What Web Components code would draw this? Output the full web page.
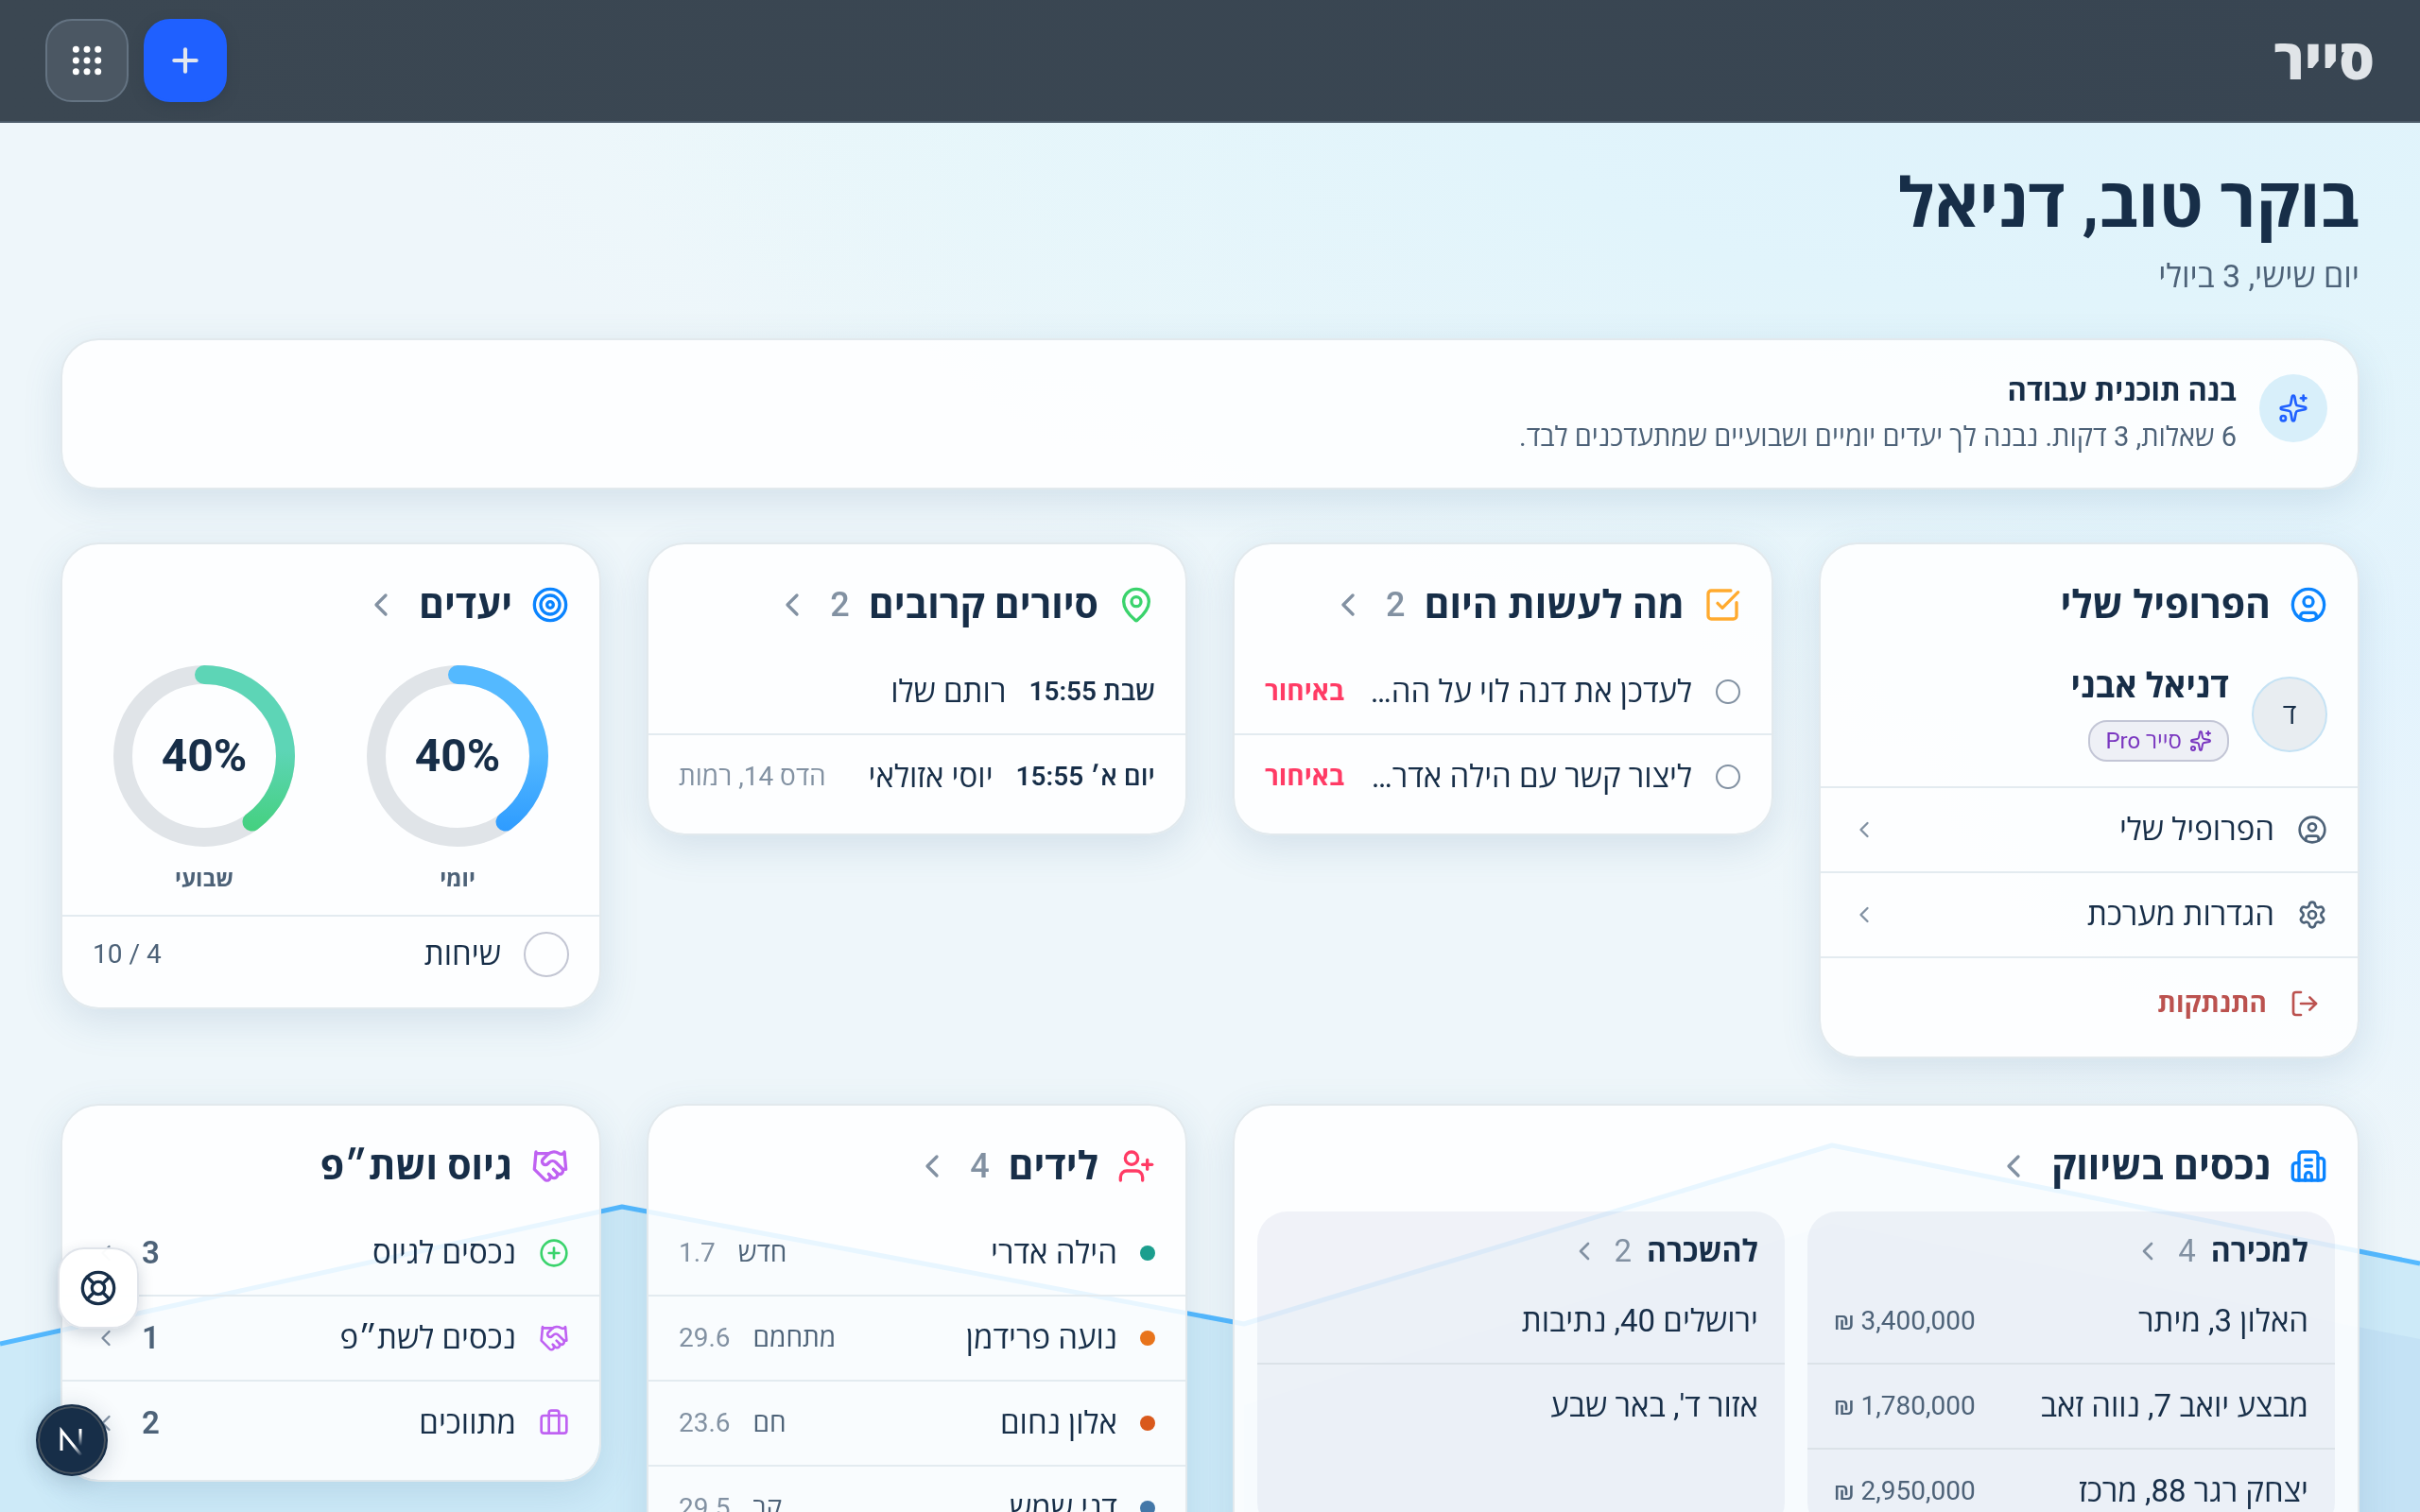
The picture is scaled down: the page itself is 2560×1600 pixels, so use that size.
<!DOCTYPE html>
<html lang="he" dir="rtl">
<head>
<meta charset="utf-8">
<meta name="viewport" content="width=device-width, initial-scale=1">
<title>סייר</title>
<style>
  :root {
    --ink: #172e48;
    --ink-2: #4d6278;
    --ink-3: #8291a2;
    --line: #e3ebf0;
    --blue: #0a84ff;
    --green: #3ad36c;
    --orange: #ffaa2e;
    --pink: #ff3b65;
    --purple: #bf62f2;
    scrollbar-width: none;
  }

  body {
    margin: 0;
    min-height: 100vh;
    background: #eef6fa;
    color: var(--ink);
    font-family: Roboto, "Open Sans", "Noto Sans", sans-serif;
    font-size: 33px;
    line-height: 40px;
  }

  main {
    padding: 50px 64px 64px;
  }

  h1 {
    margin: 0;
    font-size: 72px;
    line-height: 72px;
    font-weight: 700;
  }

  .date {
    margin: 20px 0 46px;
    color: var(--ink-2);
    font-size: 34px;
  }

  .grid {
    display: grid;
    grid-template-columns: repeat(4, minmax(0, 1fr));
    align-items: start;
    gap: 48px;
    margin-top: 56px;
  }

  .wide {
    grid-column: span 2;
  }
</style>
</head>
<body>
  <page-backdrop></page-backdrop>
  <app-header brand="סייר"></app-header>

  <main>
    <h1>בוקר טוב, דניאל</h1>
    <p class="date">יום שישי, 3 ביולי</p>

    <plan-banner>
      <span slot="title">בנה תוכנית עבודה</span>
      <span slot="text">6 שאלות, 3 דקות. נבנה לך יעדים יומיים ושבועיים שמתעדכנים לבד.</span>
    </plan-banner>

    <div class="grid">
      <dash-card heading="הפרופיל שלי" icon="user" color="var(--blue)">
        <profile-head name="דניאל אבני" initial="ד" plan="סייר Pro"></profile-head>
        <link-row icon="user" arrow>הפרופיל שלי</link-row>
        <link-row icon="settings" arrow>הגדרות מערכת</link-row>
        <sign-out>התנתקות</sign-out>
      </dash-card>

      <dash-card heading="מה לעשות היום" icon="check" color="var(--orange)" count="2" arrow>
        <task-row state="באיחור">לעדכן את דנה לוי על הה…</task-row>
        <task-row state="באיחור">ליצור קשר עם הילה אדר…</task-row>
      </dash-card>

      <dash-card heading="סיורים קרובים" icon="pin" color="var(--green)" count="2" arrow>
        <tour-row time="שבת 15:55">רותם שלו</tour-row>
        <tour-row time="יום א׳ 15:55" place="הדס 14, רמות">יוסי אזולאי</tour-row>
      </dash-card>

      <dash-card heading="יעדים" icon="target" color="var(--blue)" arrow>
        <goal-rings>
          <progress-ring value="40" from="#54b9ff" to="#2c9aff">יומי</progress-ring>
          <progress-ring value="40" from="#5dd5b6" to="#43d07c">שבועי</progress-ring>
        </goal-rings>
        <goal-row score="4 / 10">שיחות</goal-row>
      </dash-card>

      <dash-card class="wide" heading="נכסים בשיווק" icon="building" color="var(--blue)" arrow>
        <panel-pair>
          <list-panel heading="למכירה" count="4">
            <estate-row price="3,400,000 ₪">האלון 3, מיתר</estate-row>
            <estate-row price="1,780,000 ₪">מבצע יואב 7, נווה זאב</estate-row>
            <estate-row price="2,950,000 ₪">יצחק רגר 88, מרכז</estate-row>
          </list-panel>
          <list-panel heading="להשכרה" count="2">
            <estate-row>ירושלים 40, נתיבות</estate-row>
            <estate-row>אזור ד', באר שבע</estate-row>
          </list-panel>
        </panel-pair>
      </dash-card>

      <dash-card heading="לידים" icon="userPlus" color="var(--pink)" count="4" arrow>
        <lead-row color="#1b9e8e" status="חדש" date="1.7">הילה אדרי</lead-row>
        <lead-row color="#e8741c" status="מתחמם" date="29.6">נועה פרידמן</lead-row>
        <lead-row color="#d9591c" status="חם" date="23.6">אלון נחום</lead-row>
        <lead-row color="#4377a8" status="קר" date="29.5">דני שמש</lead-row>
      </dash-card>

      <dash-card heading="גיוס ושת״פ" icon="handshake" color="var(--purple)">
        <link-row icon="plus" color="var(--green)" count="3" arrow>נכסים לגיוס</link-row>
        <link-row icon="handshake" color="var(--purple)" count="1" arrow>נכסים לשת״פ</link-row>
        <link-row icon="briefcase" color="var(--purple)" count="2" arrow>מתווכים</link-row>
      </dash-card>
    </div>
  </main>

  <floating-tools></floating-tools>

<script>
const ICONS = {
  user: '<circle cx="12" cy="12" r="10"/><circle cx="12" cy="10" r="3"/><path d="M7 20.662V19a2 2 0 0 1 2-2h6a2 2 0 0 1 2 2v1.662"/>',
  settings: '<path d="M9.671 4.136a2.34 2.34 0 0 1 4.659 0 2.34 2.34 0 0 0 3.319 1.915 2.34 2.34 0 0 1 2.33 4.033 2.34 2.34 0 0 0 0 3.831 2.34 2.34 0 0 1-2.33 4.033 2.34 2.34 0 0 0-3.319 1.915 2.34 2.34 0 0 1-4.659 0 2.34 2.34 0 0 0-3.32-1.915 2.34 2.34 0 0 1-2.33-4.033 2.34 2.34 0 0 0 0-3.831A2.34 2.34 0 0 1 6.35 6.051a2.34 2.34 0 0 0 3.319-1.915"/><circle cx="12" cy="12" r="3"/>',
  logout: '<path d="m16 17 5-5-5-5"/><path d="M21 12H9"/><path d="M9 21H5a2 2 0 0 1-2-2V5a2 2 0 0 1 2-2h4"/>',
  check: '<path d="M21 10.656V19a2 2 0 0 1-2 2H5a2 2 0 0 1-2-2V5a2 2 0 0 1 2-2h12.344"/><path d="m9 11 3 3L22 4"/>',
  pin: '<path d="M20 10c0 4.993-5.539 10.193-7.399 11.799a1 1 0 0 1-1.202 0C9.539 20.193 4 14.993 4 10a8 8 0 0 1 16 0"/><circle cx="12" cy="10" r="3"/>',
  target: '<circle cx="12" cy="12" r="10"/><circle cx="12" cy="12" r="6"/><circle cx="12" cy="12" r="2"/>',
  building: '<path d="M10 12h4"/><path d="M10 8h4"/><path d="M14 21v-3a2 2 0 0 0-4 0v3"/><path d="M6 10H4a2 2 0 0 0-2 2v7a2 2 0 0 0 2 2h16a2 2 0 0 0 2-2V9a2 2 0 0 0-2-2h-2"/><path d="M6 21V5a2 2 0 0 1 2-2h8a2 2 0 0 1 2 2v16"/>',
  userPlus: '<path d="M16 21v-2a4 4 0 0 0-4-4H6a4 4 0 0 0-4 4v2"/><circle cx="9" cy="7" r="4"/><path d="M19 8v6"/><path d="M22 11h-6"/>',
  handshake: '<path d="m11 17 2 2a1 1 0 1 0 3-3"/><path d="m14 14 2.5 2.5a1 1 0 1 0 3-3l-3.88-3.88a3 3 0 0 0-4.24 0l-.88.88a1 1 0 1 1-3-3l2.81-2.81a5.79 5.79 0 0 1 7.06-.87l.47.28a2 2 0 0 0 1.42.25L21 4"/><path d="m21 3 1 11h-2"/><path d="M3 3 2 14l6.5 6.5a1 1 0 1 0 3-3"/><path d="M3 4h8"/>',
  plus: '<circle cx="12" cy="12" r="10"/><path d="M8 12h8"/><path d="M12 8v8"/>',
  add: '<path d="M5 12h14"/><path d="M12 5v14"/>',
  briefcase: '<path d="M16 20V4a2 2 0 0 0-2-2h-4a2 2 0 0 0-2 2v16"/><rect width="20" height="14" x="2" y="6" rx="2"/>',
  sparkles: '<path d="M11.017 2.814a1 1 0 0 1 1.966 0l1.051 5.558a2 2 0 0 0 1.594 1.594l5.558 1.051a1 1 0 0 1 0 1.966l-5.558 1.051a2 2 0 0 0-1.594 1.594l-1.051 5.558a1 1 0 0 1-1.966 0l-1.051-5.558a2 2 0 0 0-1.594-1.594l-5.558-1.051a1 1 0 0 1 0-1.966l5.558-1.051a2 2 0 0 0 1.594-1.594z"/><path d="M20 2v4"/><path d="M22 4h-4"/><circle cx="4" cy="20" r="2"/>',
  buoy: '<circle cx="12" cy="12" r="10"/><path d="m4.93 4.93 4.24 4.24"/><path d="m14.83 9.17 4.24-4.24"/><path d="m14.83 14.83 4.24 4.24"/><path d="m9.17 14.83-4.24 4.24"/><circle cx="12" cy="12" r="4"/>',
  chevron: '<path d="m15 18-6-6 6-6"/>',
  dots: [5, 12, 19].map(y => [5, 12, 19].map(x => `<circle cx="${x}" cy="${y}" r="1.1" fill="currentColor"/>`).join('')).join('')
};

// Shared by every element: each one only gives its own styles and markup
class BaseElement extends HTMLElement {
  constructor() {
    super();
    this.attachShadow({ mode: 'open' });
  }

  attr(name) {
    return this.getAttribute(name) || '';
  }

  connectedCallback() {
    const template = document.createElement('template');
    template.innerHTML = `<style>:host, * { box-sizing: border-box; } ${this.getStyles()}</style>${this.getMarkup()}`;
    this.shadowRoot.replaceChildren(template.content.cloneNode(true));
  }
}

class AppIcon extends BaseElement {
  getStyles() {
    return `
      :host { display: block; flex: none; width: ${this.attr('size')}px; height: ${this.attr('size')}px; }
      svg { display: block; width: 100%; height: 100%; }
    `;
  }

  getMarkup() {
    return `<svg viewBox="0 0 24 24" fill="none" stroke="currentColor" stroke-width="${this.attr('weight') || 2}" stroke-linecap="round" stroke-linejoin="round" aria-hidden="true">${ICONS[this.attr('name')]}</svg>`;
  }
}

class PageBackdrop extends BaseElement {
  getStyles() {
    return `
      :host {
        position: fixed; inset: 0; z-index: -1;
        background:
          radial-gradient(ellipse 60% 50% at 84% 0%, #def2fb 0%, #e1f4fb 40%, transparent 100%),
          radial-gradient(ellipse 30% 30% at 45% 0%, #e9f8fa, transparent),
          radial-gradient(ellipse 30% 40% at 100% 42%, #e3f3fd, transparent),
          #eef6fa;
      }
      svg { display: block; width: 100%; height: 100%; }
    `;
  }

  getMarkup() {
    return `
      <svg viewBox="0 0 2560 1600" preserveAspectRatio="none" aria-hidden="true">
        <path fill="#cdeaf8" d="M0 1422 658 1277 1316 1401 1938 1212 2560 1337V1600H0Z"/>
        <path fill="#c4e2f5" d="M1316 1487 1938 1295 2560 1417V1600H1316Z"/>
        <path fill="none" stroke="#54b9ff" stroke-width="5" stroke-linejoin="round" d="M0 1422 658 1277 1316 1401 1938 1212 2560 1337"/>
      </svg>
    `;
  }
}

class AppHeader extends BaseElement {
  getStyles() {
    return `
      :host { display: block; }
      header {
        display: flex; align-items: center; justify-content: space-between;
        height: 130px; padding: 0 48px;
        background: linear-gradient(90deg, #3b4752, #384552);
        border-bottom: 2px solid #4b5a68;
      }
      .brand { color: #e0e4e8; font-size: 59px; line-height: 64px; font-weight: 800; text-decoration: none; }
      .tools { display: flex; gap: 16px; }
      button {
        display: grid; place-items: center;
        width: 88px; height: 88px; padding: 0;
        border: 2px solid #647382; border-radius: 28px;
        background: #4b5763; color: #fff;
      }
      .add { border-color: #1f60ff; background: #1f60ff; color: #e2e6ee; box-shadow: 0 4px 12px #2c3a4880; }
    `;
  }

  getMarkup() {
    return `
      <header>
        <a class="brand" href="#">${this.attr('brand')}</a>
        <div class="tools">
          <button class="add" aria-label="הוספה"><app-icon name="add" size="40" weight="2.5"></app-icon></button>
          <button aria-label="תפריט"><app-icon name="dots" size="40"></app-icon></button>
        </div>
      </header>
    `;
  }
}

const SURFACE = `
  background: #ffffffdd;
  border: 2px solid #e2e9ed;
  border-radius: 40px;
  background-clip: padding-box;
  box-shadow: 0 12px 40px #3c6e9626;
`;

class PlanBanner extends BaseElement {
  getStyles() {
    return `
      :host { display: block; }
      a {
        ${SURFACE}
        display: flex; align-items: center; gap: 24px;
        padding: 34px 32px; color: inherit; text-decoration: none;
      }
      .badge {
        display: grid; place-items: center; flex: none;
        width: 72px; height: 72px; margin-bottom: 12px; border-radius: 50%;
        background: #d8effa; color: #1f60ff;
      }
      .text { display: grid; gap: 8px; }
      .title, .note { display: block; }
      .title { font-size: 31px; font-weight: 700; }
      .note { color: var(--ink-2); font-size: 29px; }
    `;
  }

  getMarkup() {
    return `
      <a href="#">
        <span class="badge"><app-icon name="sparkles" size="32"></app-icon></span>
        <span class="text">
          <slot class="title" name="title"></slot>
          <slot class="note" name="text"></slot>
        </span>
      </a>
    `;
  }
}

class DashCard extends BaseElement {
  getStyles() {
    return `
      :host { display: block; ${SURFACE} padding-bottom: 16px; }
      header { display: flex; align-items: center; gap: 20px; height: 112px; padding: 32px 32px 16px; }
      header > app-icon { color: ${this.attr('color')}; }
      h2 { margin: 0; font-size: 41px; line-height: 48px; font-weight: 700; white-space: nowrap; }
      a { display: flex; align-items: center; gap: 20px; color: inherit; text-decoration: none; }
      .count, .arrow { color: var(--ink-3); }
      .count { font-size: 36px; font-weight: 500; }
      ::slotted(:not(:first-child)) { border-top: 2px solid var(--line); }
    `;
  }

  getMarkup() {
    const count = this.hasAttribute('count') ? `<span class="count">${this.attr('count')}</span>` : '';
    const arrow = '<app-icon class="arrow" name="chevron" size="40"></app-icon>';
    const title = `<h2>${this.attr('heading')}</h2>`;
    return `
      <header>
        <app-icon name="${this.attr('icon')}" size="40"></app-icon>
        ${this.hasAttribute('arrow') ? `<a href="#">${title}${count}${arrow}</a>` : title}
      </header>
      <slot></slot>
    `;
  }
}

class ProfileHead extends BaseElement {
  getStyles() {
    return `
      :host { display: flex; align-items: center; gap: 24px; height: 144px; padding: 0 32px 8px; }
      .avatar {
        display: grid; place-items: center; flex: none;
        width: 80px; height: 80px; border: 2px solid #c5e2f4; border-radius: 50%;
        background: #e8edf1; font-size: 29px;
      }
      .who { display: grid; justify-items: start; gap: 16px; }
      .name { font-size: 36px; line-height: 40px; font-weight: 700; }
      .plan {
        display: flex; align-items: center; gap: 8px;
        height: 44px; padding: 0 16px; border: 2px solid #c3c6d6; border-radius: 20px;
        background: #eef0f6; color: #7a37c0; font-size: 24px;
      }
    `;
  }

  getMarkup() {
    return `
      <span class="avatar">${this.attr('initial')}</span>
      <div class="who">
        <span class="name">${this.attr('name')}</span>
        <span class="plan"><app-icon name="sparkles" size="24"></app-icon>${this.attr('plan')}</span>
      </div>
    `;
  }
}

// Row box used by all the lists
const ROW = `
  display: flex; align-items: center; gap: 24px;
  height: 88px; padding: 0 32px;
  color: inherit; text-decoration: none; white-space: nowrap;
`;

class LinkRow extends BaseElement {
  getStyles() {
    return `
      :host { display: block; }
      a { ${ROW} }
      .icon { color: ${this.attr('color') || 'var(--ink-2)'}; }
      .label { flex: 1; }
      .count { color: var(--ink-2); font-weight: 600; }
      .arrow { color: var(--ink-3); }
    `;
  }

  getMarkup() {
    return `
      <a href="#">
        <app-icon class="icon" name="${this.attr('icon')}" size="32"></app-icon>
        <span class="label"><slot></slot></span>
        ${this.hasAttribute('count') ? `<span class="count">${this.attr('count')}</span>` : ''}
        <app-icon class="arrow" name="chevron" size="28"></app-icon>
      </a>
    `;
  }
}

class SignOut extends BaseElement {
  getStyles() {
    return `
      :host { display: block; padding: 8px 32px 0; }
      button {
        display: flex; align-items: center; gap: 24px;
        width: 100%; height: 80px; padding: 0 8px; border: 0; background: none;
        color: #bb524f; font: inherit; font-size: 28px; font-weight: 700;
      }
    `;
  }

  getMarkup() {
    return `<button><app-icon name="logout" size="32"></app-icon><slot></slot></button>`;
  }
}

class TaskRow extends BaseElement {
  getStyles() {
    return `
      :host { display: block; }
      label { ${ROW} }
      input {
        appearance: none; flex: none; width: 26px; height: 26px; margin: 1px;
        border: 2px solid var(--ink-3); border-radius: 50%;
      }
      .text { flex: 1; min-width: 0; overflow: hidden; text-overflow: ellipsis; }
      .state { color: var(--pink); font-size: 28px; font-weight: 700; }
    `;
  }

  getMarkup() {
    return `
      <label>
        <input type="checkbox">
        <span class="text"><slot></slot></span>
        <span class="state">${this.attr('state')}</span>
      </label>
    `;
  }
}

class TourRow extends BaseElement {
  getStyles() {
    return `
      :host { display: block; }
      a { ${ROW} }
      .time { font-size: 28px; font-weight: 600; }
      .name { flex: 1; }
      .place { color: var(--ink-3); font-size: 28px; }
    `;
  }

  getMarkup() {
    return `
      <a href="#">
        <span class="time">${this.attr('time')}</span>
        <span class="name"><slot></slot></span>
        <span class="place">${this.attr('place')}</span>
      </a>
    `;
  }
}

class GoalRings extends BaseElement {
  getStyles() {
    return `
      :host { display: grid; grid-template-columns: 1fr 1fr; gap: 32px; padding: 16px 32px 20px; }
    `;
  }

  getMarkup() {
    return `<slot></slot>`;
  }
}

class ProgressRing extends BaseElement {
  getStyles() {
    return `
      :host { display: grid; justify-items: center; gap: 16px; }
      .ring { display: grid; place-items: center; }
      .ring > * { grid-area: 1 / 1; }
      svg { display: block; width: 192px; height: 192px; }
      .value { direction: ltr; font-size: 48px; font-weight: 700; }
      .label { color: var(--ink-2); font-size: 24px; line-height: 36px; font-weight: 700; }
    `;
  }

  getMarkup() {
    const value = this.attr('value');
    return `
      <div class="ring">
        <svg viewBox="0 0 192 192" aria-hidden="true">
          <defs>
            <linearGradient id="arc" gradientUnits="userSpaceOnUse" x1="0" y1="90" x2="0" y2="180">
              <stop offset="0" stop-color="${this.attr('from')}"/>
              <stop offset="1" stop-color="${this.attr('to')}"/>
            </linearGradient>
          </defs>
          <circle cx="96" cy="96" r="86" fill="none" stroke="#e0e4e8" stroke-width="20"/>
          <path d="M96 10a86 86 0 1 1 0 172 86 86 0 1 1 0-172" fill="none" stroke="url(#arc)" stroke-width="20" stroke-linecap="round" pathLength="100" stroke-dasharray="${value} 100"/>
        </svg>
        <span class="value">${value}%</span>
      </div>
      <span class="label"><slot></slot></span>
    `;
  }
}

class GoalRow extends BaseElement {
  getStyles() {
    return `
      :host { display: block; }
      label { ${ROW} height: 80px; }
      input {
        appearance: none; flex: none; width: 48px; height: 48px; margin: 0;
        border: 2px solid #c3c6d3; border-radius: 50%;
      }
      .text { flex: 1; }
      .score { color: var(--ink-2); font-size: 28px; }
    `;
  }

  getMarkup() {
    return `
      <label>
        <input type="checkbox">
        <span class="text"><slot></slot></span>
        <span class="score">${this.attr('score')}</span>
      </label>
    `;
  }
}

class PanelPair extends BaseElement {
  getStyles() {
    return `
      :host { display: grid; grid-template-columns: 1fr 1fr; gap: 24px; padding: 0 24px 8px; }
    `;
  }

  getMarkup() {
    return `<slot></slot>`;
  }
}

class ListPanel extends BaseElement {
  getStyles() {
    return `
      :host { display: block; border-radius: 32px; background: #2438800f; }
      a {
        display: flex; align-items: center; gap: 16px;
        padding: 24px 28px 12px; line-height: 36px;
        color: inherit; text-decoration: none;
      }
      h3 { margin: 0; font-size: 32px; font-weight: 700; }
      .count, .arrow { color: var(--ink-3); }
      ::slotted(:not(:first-child)) { border-top: 2px solid #dbe2e8; }
    `;
  }

  getMarkup() {
    return `
      <a href="#">
        <h3>${this.attr('heading')}</h3>
        <span class="count">${this.attr('count')}</span>
        <app-icon class="arrow" name="chevron" size="32"></app-icon>
      </a>
      <slot></slot>
    `;
  }
}

class EstateRow extends BaseElement {
  getStyles() {
    return `
      :host { display: block; }
      a { ${ROW} padding: 0 28px; }
      .name { flex: 1; }
      .price { color: var(--ink-2); font-size: 28px; }
    `;
  }

  getMarkup() {
    return `
      <a href="#">
        <span class="name"><slot></slot></span>
        <span class="price">${this.attr('price')}</span>
      </a>
    `;
  }
}

class LeadRow extends BaseElement {
  getStyles() {
    return `
      :host { display: block; }
      a { ${ROW} }
      .dot { flex: none; width: 16px; height: 16px; border-radius: 50%; background: ${this.attr('color')}; }
      .name { flex: 1; }
      .status { color: var(--ink-2); font-size: 28px; }
      .date { color: var(--ink-3); font-size: 28px; }
    `;
  }

  getMarkup() {
    return `
      <a href="#">
        <span class="dot"></span>
        <span class="name"><slot></slot></span>
        <span class="status">${this.attr('status')}</span>
        <span class="date">${this.attr('date')}</span>
      </a>
    `;
  }
}

class FloatingTools extends BaseElement {
  getStyles() {
    return `
      button { position: fixed; display: grid; place-items: center; padding: 0; }
      .help {
        left: 61px; bottom: 194px; width: 86px; height: 86px;
        border: 2px solid #e0e4ea; border-radius: 28px;
        background: #fffffff5; color: var(--ink);
        box-shadow: 0 6px 16px #1c2e4830;
      }
      .dev {
        left: 38px; bottom: 38px; width: 76px; height: 76px;
        border: 2px solid #172e48; border-radius: 50%;
        background: #172e48; box-shadow: inset 0 0 0 2px #46525e, 0 4px 24px #1c2e4830;
      }
      svg { display: block; width: 28px; height: 32px; }
    `;
  }

  getMarkup() {
    return `
      <button class="help" aria-label="עזרה"><app-icon name="buoy" size="40"></app-icon></button>
      <button class="dev" aria-label="כלי פיתוח">
        <svg viewBox="0 0 28 32" fill="none" stroke-width="3" aria-hidden="true">
          <defs>
            <linearGradient id="a" gradientUnits="userSpaceOnUse" x1="14" y1="16" x2="26" y2="31">
              <stop offset=".3" stop-color="#fff"/>
              <stop offset="1" stop-color="#fff" stop-opacity="0"/>
            </linearGradient>
            <linearGradient id="b" gradientUnits="userSpaceOnUse" x1="0" y1="4" x2="0" y2="22">
              <stop offset=".2" stop-color="#fff"/>
              <stop offset="1" stop-color="#fff" stop-opacity="0"/>
            </linearGradient>
          </defs>
          <path stroke="url(#a)" d="M3 27V6l21 26"/>
          <path stroke="url(#b)" d="M23 4v18"/>
        </svg>
      </button>
    `;
  }
}

customElements.define('app-icon', AppIcon);
customElements.define('page-backdrop', PageBackdrop);
customElements.define('app-header', AppHeader);
customElements.define('plan-banner', PlanBanner);
customElements.define('dash-card', DashCard);
customElements.define('profile-head', ProfileHead);
customElements.define('link-row', LinkRow);
customElements.define('sign-out', SignOut);
customElements.define('task-row', TaskRow);
customElements.define('tour-row', TourRow);
customElements.define('goal-rings', GoalRings);
customElements.define('progress-ring', ProgressRing);
customElements.define('goal-row', GoalRow);
customElements.define('panel-pair', PanelPair);
customElements.define('list-panel', ListPanel);
customElements.define('estate-row', EstateRow);
customElements.define('lead-row', LeadRow);
customElements.define('floating-tools', FloatingTools);
</script>
</body>
</html>
